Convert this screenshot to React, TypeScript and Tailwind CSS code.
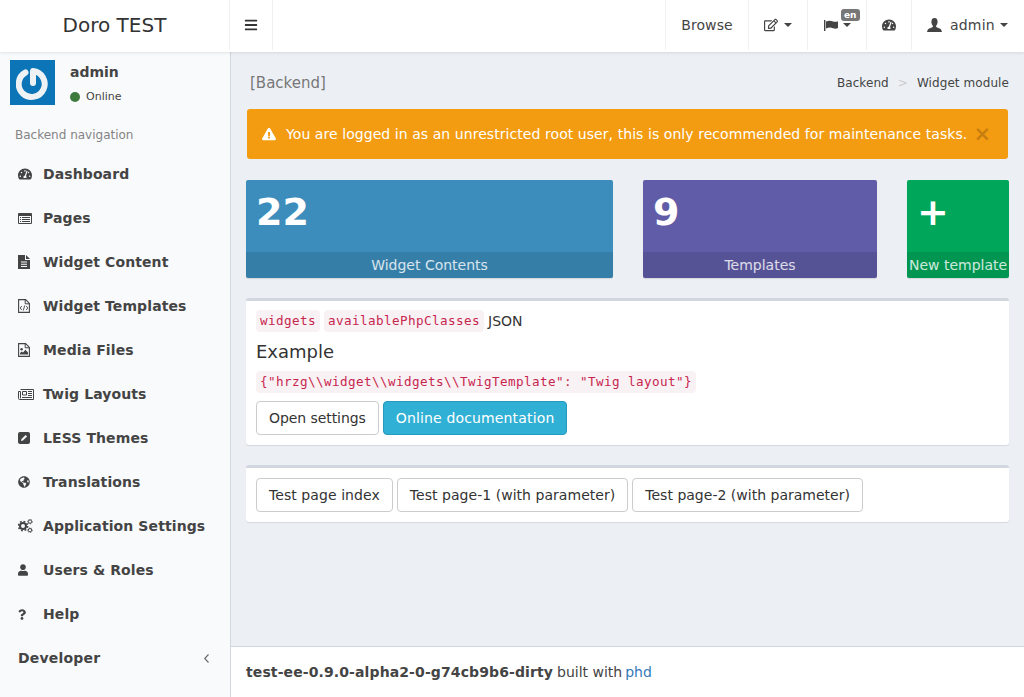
import type { ReactNode } from "react";
import {
  FaBars,
  FaExclamationTriangle,
  FaGlobeAmericas,
  FaQuestion,
  FaRegEdit,
  FaTachometerAlt,
  FaUser,
} from "react-icons/fa";

const FILE_OUTLINE = "M.6.6H7.6L11.4 4.4V13.4H.6Z";

function PagesIcon() {
  return (
    <svg width="14" height="11" viewBox="0 0 14 11" fill="currentColor">
      <path fillRule="evenodd" d="M1 0H13Q14 0 14 1V10Q14 11 13 11H1Q0 11 0 10V1Q0 0 1 0ZM1 3V10H13V3Z" />
      <path d="M2 4H3V5H2ZM4 4H12V5H4ZM2 6H3V7H2ZM4 6H12V7H4ZM2 8H3V9H2ZM4 8H12V9H4Z" />
    </svg>
  );
}

function FileTextIcon() {
  return (
    <svg width="12" height="14" viewBox="0 0 12 14" fill="currentColor">
      <path fillRule="evenodd" d="M0 0H7V5H12V14H0ZM3 6.5V7.5H9V6.5ZM3 8.7V9.7H9V8.7ZM3 10.9V11.9H9V10.9Z" />
      <path d="M8 0L12 4H8Z" />
    </svg>
  );
}

function FileCodeIcon() {
  return (
    <svg width="12" height="14" viewBox="0 0 12 14" fill="none" stroke="currentColor">
      <path d={FILE_OUTLINE} strokeWidth="1.1" />
      <path d="M7.2.8V4.8H11" strokeWidth="1" />
      <path d="M3.8 7L2.2 9L3.8 11M8.2 7L9.8 9L8.2 11M6.7 6.5L5.3 11.5" strokeWidth=".9" />
    </svg>
  );
}

function FileImageIcon() {
  return (
    <svg width="12" height="14" viewBox="0 0 12 14" fill="none" stroke="currentColor">
      <path d={FILE_OUTLINE} strokeWidth="1.1" />
      <path d="M7.2.8V4.8H11" strokeWidth="1" />
      <circle cx="3.6" cy="6.2" r="1.2" fill="currentColor" stroke="none" />
      <path d="M2 11.5V10L3.8 8.4L5 9.4L7.4 6.8L10 9.4V11.5Z" fill="currentColor" stroke="none" />
    </svg>
  );
}

function NewspaperIcon() {
  return (
    <svg width="16" height="11" viewBox="0 0 16 11" fill="none" stroke="currentColor">
      <path d="M2.5.5H15.5V10.5H1.6Q.5 10.5 .5 9.4V2.5H2.5V9.4" strokeWidth="1" />
      <path d="M4.5 2.5H8.5V6H4.5Z" strokeWidth="1" />
      <path d="M10 2.5H14M10 4.5H14M10 6.5H14M4 8.5H14" strokeWidth="1" />
    </svg>
  );
}

function PencilSquareIcon() {
  return (
    <svg width="12" height="12" viewBox="0 0 12 12">
      <rect width="12" height="12" rx="2" fill="currentColor" />
      <path d="M3 9L3.5 7L7.6 2.9L9.1 4.4L5 8.5Z" fill="#f4f5f7" />
    </svg>
  );
}

function CogsIcon() {
  return (
    <svg width="15" height="14" viewBox="0 0 15 14" fill="none" stroke="currentColor">
      <circle cx="5" cy="7" r="3" strokeWidth="2" />
      <circle cx="5" cy="7" r="4.6" strokeWidth="1.6" strokeDasharray="1.8 1.8" />
      <circle cx="12" cy="2.6" r="1.7" strokeWidth="1" />
      <circle cx="12" cy="2.6" r="2.4" strokeWidth=".7" strokeDasharray="1.1 1.1" />
      <circle cx="12" cy="11.2" r="1.7" strokeWidth="1" />
      <circle cx="12" cy="11.2" r="2.4" strokeWidth=".7" strokeDasharray="1.1 1.1" />
    </svg>
  );
}

function FlagIcon() {
  return (
    <svg width="14" height="11" viewBox="0 0 14 11" fill="currentColor">
      <path d="M0 0H1.4V11H0Z" />
      <path d="M2 1.6C5 .2 7 .6 9 1.4C11 2 12.6 2 14 1.2V8C12.4 8.8 11 8.8 9 8.2C7 7.4 5 7 2 8.4Z" />
    </svg>
  );
}

function GlyphUser() {
  return (
    <svg width="15" height="14" viewBox="0 0 15 14" fill="currentColor">
      <path d="M7.5 0C5 0 4.4 2 4.4 4C4.4 6 5.4 7 6 8C6 9 5 9.5 3 10.3C1 11 .5 12 0 14H15C14.5 12 14 11 12 10.3C10 9.5 9 9 9 8C9.6 7 10.6 6 10.6 4C10.6 2 10 0 7.5 0Z" />
    </svg>
  );
}

function Caret() {
  return <span className="h-0 w-0 border-x-[4px] border-t-[4px] border-x-transparent border-t-[#444]" />;
}

const menu = [
  { label: "Dashboard", icon: <FaTachometerAlt className="h-[14px] w-[14px]" /> },
  { label: "Pages", icon: <PagesIcon /> },
  { label: "Widget Content", icon: <FileTextIcon /> },
  { label: "Widget Templates", icon: <FileCodeIcon /> },
  { label: "Media Files", icon: <FileImageIcon /> },
  { label: "Twig Layouts", icon: <NewspaperIcon /> },
  { label: "LESS Themes", icon: <PencilSquareIcon /> },
  { label: "Translations", icon: <FaGlobeAmericas className="h-[12px] w-[12px]" /> },
  { label: "Application Settings", icon: <CogsIcon /> },
  { label: "Users & Roles", icon: <FaUser className="h-[12px] w-[10px]" /> },
  { label: "Help", icon: <FaQuestion className="h-[11px] w-[8px]" /> },
];

function NavCell({ className, children }: { className: string; children: ReactNode }) {
  return (
    <div className={`relative flex h-[50px] items-center border-l border-[#eef0f2] ${className}`}>{children}</div>
  );
}

function Code({ children }: { children: ReactNode }) {
  return (
    <code className="rounded bg-[#f9f2f4] px-[4px] py-[2px] font-['DejaVu_Sans_Mono',monospace] text-[12.6px] tracking-[0.42px] text-[#c7254e]">
      {children}
    </code>
  );
}

function Btn({ children, info, className = "" }: { children: ReactNode; info?: boolean; className?: string }) {
  return (
    <span
      className={`inline-flex h-[34px] items-center whitespace-nowrap rounded border px-[12px] text-[14px] ${
        info ? "border-[#269abc] bg-[#31b0d5] text-white" : "border-[#ccc] bg-white text-[#333]"
      } ${className}`}
    >
      {children}
    </span>
  );
}

function Stat({ value, label, color }: { value: string; label: string; color: string }) {
  return (
    <div className={`flex h-[98px] flex-col overflow-hidden rounded-[2px] shadow-[0_1px_1px_rgba(0,0,0,0.1)] ${color}`}>
      <div className="h-[72px] px-[10px] pt-[11px] text-[38px] font-bold leading-[42px] text-white">{value}</div>
      <div className="flex h-[26px] items-center justify-center whitespace-nowrap bg-black/10 text-[14px] text-white/80">
        {label}
      </div>
    </div>
  );
}

export default function App() {
  return (
    <div className="flex h-[697px] w-[1024px] flex-col overflow-hidden bg-[#ecf0f5] font-['DejaVu_Sans',sans-serif] text-[14px] text-[#333]">
      <header className="relative z-10 flex h-[52px] shrink-0 items-start bg-white shadow-[0_1px_3px_rgba(0,0,0,0.1)]">
        <div className="flex h-[50px] w-[230px] items-center justify-center border-r border-[#eef0f2] text-[20px] text-[#333]">
          Doro TEST
        </div>
        <div className="flex h-[50px] w-[43px] items-center justify-center border-r border-[#eef0f2] text-[14px] text-[#333]">
          <FaBars />
        </div>
        <div className="ml-auto flex text-[#444]">
          <NavCell className="w-[83px] justify-center">
            <span className="pt-[1px] tracking-[0.1px]">Browse</span>
          </NavCell>
          <NavCell className="w-[59px] justify-center">
            <FaRegEdit className="h-[14px] w-[14px]" />
            <span className="ml-[6px] flex">
              <Caret />
            </span>
          </NavCell>
          <NavCell className="w-[59px] justify-center">
            <FlagIcon />
            <span className="ml-[5px] flex">
              <Caret />
            </span>
            <span className="absolute left-[33px] top-[9px] rounded-[3px] bg-[#777] px-[3px] text-[9px] font-bold leading-[12px] text-white">
              en
            </span>
          </NavCell>
          <NavCell className="w-[45px] justify-center">
            <FaTachometerAlt className="h-[14px] w-[14px]" />
          </NavCell>
          <NavCell className="w-[113px] pl-[15px]">
            <GlyphUser />
            <span className="ml-[8px] tracking-[0.2px]">admin</span>
            <span className="ml-[5px] flex">
              <Caret />
            </span>
          </NavCell>
        </div>
      </header>

      <div className="flex min-h-0 flex-1">
        <aside className="w-[231px] shrink-0 border-r border-[#d2d6de] bg-[#f9fafc] text-[#444]">
          <div className="flex h-[63px] px-[10px] pt-[8px]">
            <svg width="45" height="45" viewBox="0 0 45 45" className="shrink-0">
              <defs>
                <filter id="logo-soft" x="-10%" y="-10%" width="120%" height="120%">
                  <feGaussianBlur stdDeviation="0.6" />
                </filter>
              </defs>
              <rect width="45" height="45" fill="#0b75b7" />
              <path
                d="M15.5 12.5 A 13 13 0 1 0 23 11 V 23"
                fill="none"
                stroke="#eef2f4"
                strokeWidth="6"
                strokeLinecap="round"
                strokeLinejoin="round"
                filter="url(#logo-soft)"
              />
            </svg>
            <div className="ml-[15px]">
              <div className="text-[14px] font-bold leading-[24px]">admin</div>
              <div className="mt-[1px] flex items-center text-[11px] leading-[24px]">
                <span className="mr-[6px] h-[10px] w-[10px] rounded-full bg-[#3d7a3d]" />
                Online
              </div>
            </div>
          </div>
          <div className="px-[15px] pb-[8px] pt-[11px] text-[12px] leading-[18px] text-[#848484]">
            Backend navigation
          </div>
          <nav className="font-bold tracking-[0.1px]">
            {menu.map((item) => (
              <div key={item.label} className="flex h-[44px] items-center pl-[18px]">
                <span className="flex w-[25px] shrink-0 items-center">{item.icon}</span>
                <span>{item.label}</span>
              </div>
            ))}
            <div className="flex h-[44px] items-center pl-[18px] pr-[21px]">
              <span className="tracking-[0.2px]">Developer</span>
              <svg width="5" height="9" viewBox="0 0 5 9" fill="none" stroke="#666" strokeWidth="1.1" className="ml-auto">
                <path d="M4.5.5L.7 4.5L4.5 8.5" />
              </svg>
            </div>
          </nav>
        </aside>

        <div className="flex min-w-0 flex-1 flex-col">
          <main className="flex-1 px-[15px] pt-[15px]">
            <div className="flex h-[32px] items-center justify-between pl-[4px]">
              <span className="pt-[1px] text-[15px] text-[#777]">[Backend]</span>
              <span className="flex items-center text-[12px] tracking-[0.08px] text-[#444]">
                Backend
                <span className="mx-[9px] text-[#ccc]">&gt;</span>
                Widget module
              </span>
            </div>
            <div className="mx-[1px] mt-[10px] flex h-[50px] items-center rounded-[3px] bg-[#f39c12] pl-[15px] pr-[17px] text-white">
              <FaExclamationTriangle className="h-[14px] w-[14px]" />
              <span className="ml-[10px] whitespace-nowrap tracking-[0.063px]">
                You are logged in as an unrestricted root user, this is only recommended for maintenance tasks.
              </span>
              <span className="ml-auto text-[21px] font-bold leading-none text-black/20">×</span>
            </div>
            <div className="mt-[21px] grid grid-cols-[367px_234px_102px] gap-[30px]">
              <Stat value="22" label="Widget Contents" color="bg-[#3c8dbc]" />
              <Stat value="9" label="Templates" color="bg-[#605ca8]" />
              <Stat value="+" label="New template" color="bg-[#00a65a]" />
            </div>
            <section className="mt-[20px] h-[147px] rounded-[3px] border-t-[3px] border-[#d2d6de] bg-white p-[10px] shadow-[0_1px_1px_rgba(0,0,0,0.1)]">
              <div className="flex h-[20px] items-center gap-[4px]">
                <Code>widgets</Code>
                <Code>availablePhpClasses</Code>
                <span>JSON</span>
              </div>
              <div className="mt-[11px] text-[18px] leading-[20px]">Example</div>
              <div className="mt-[10px] flex h-[20px] items-center">
                <Code>{'{"hrzg\\\\widget\\\\widgets\\\\TwigTemplate": "Twig layout"}'}</Code>
              </div>
              <div className="mt-[9px] flex gap-[4px]">
                <Btn className="tracking-[-0.07px]">Open settings</Btn>
                <Btn info className="tracking-[0.15px]">
                  Online documentation
                </Btn>
              </div>
            </section>
            <section className="mt-[20px] flex h-[57px] gap-[4px] rounded-[3px] border-t-[3px] border-[#d2d6de] bg-white p-[10px] shadow-[0_1px_1px_rgba(0,0,0,0.1)]">
              <Btn className="tracking-[0.07px]">Test page index</Btn>
              <Btn className="tracking-[0.04px]">Test page-1 (with parameter)</Btn>
              <Btn className="tracking-[0.01px]">Test page-2 (with parameter)</Btn>
            </section>
          </main>
          <footer className="flex h-[51px] shrink-0 items-center border-t border-[#d2d6de] bg-white px-[15px] text-[#444]">
            <b className="tracking-[0.11px]">test-ee-0.9.0-alpha2-0-g74cb9b6-dirty</b>
            <span className="ml-[4px]">built with</span>
            <span className="ml-[3px] text-[#337ab7]">phd</span>
          </footer>
        </div>
      </div>
    </div>
  );
}
